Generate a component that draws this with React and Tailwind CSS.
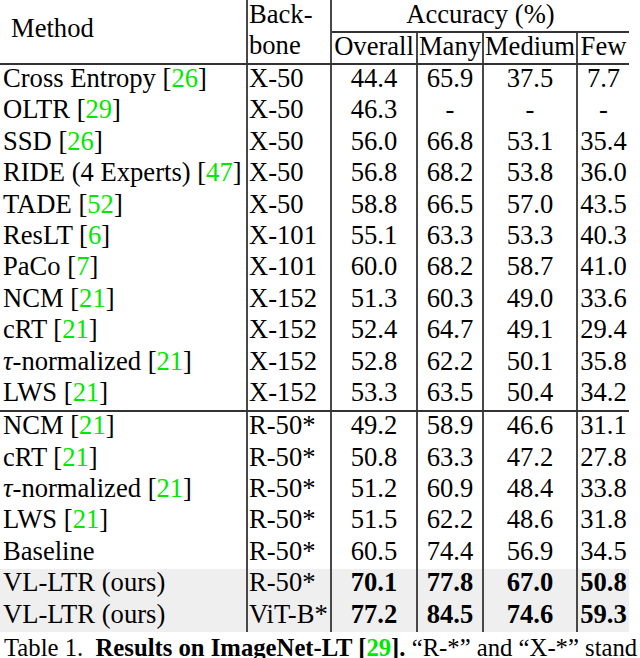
const Cite = ({ n }) => (
  <>
    [<span className="text-[#00e800]">{n}</span>]
  </>
);

const Tau = () => <i>τ</i>;

const groupA = [
  [<>Cross Entropy <Cite n="26" /></>, "X-50", "44.4", "65.9", "37.5", "7.7"],
  [<>OLTR <Cite n="29" /></>, "X-50", "46.3", "-", "-", "-"],
  [<>SSD <Cite n="26" /></>, "X-50", "56.0", "66.8", "53.1", "35.4"],
  [<>RIDE (4 Experts) <Cite n="47" /></>, "X-50", "56.8", "68.2", "53.8", "36.0"],
  [<>TADE <Cite n="52" /></>, "X-50", "58.8", "66.5", "57.0", "43.5"],
  [<>ResLT <Cite n="6" /></>, "X-101", "55.1", "63.3", "53.3", "40.3"],
  [<>PaCo <Cite n="7" /></>, "X-101", "60.0", "68.2", "58.7", "41.0"],
  [<>NCM <Cite n="21" /></>, "X-152", "51.3", "60.3", "49.0", "33.6"],
  [<>cRT <Cite n="21" /></>, "X-152", "52.4", "64.7", "49.1", "29.4"],
  [<><Tau />-normalized <Cite n="21" /></>, "X-152", "52.8", "62.2", "50.1", "35.8"],
  [<>LWS <Cite n="21" /></>, "X-152", "53.3", "63.5", "50.4", "34.2"],
];

const groupB = [
  [<>NCM <Cite n="21" /></>, "R-50*", "49.2", "58.9", "46.6", "31.1"],
  [<>cRT <Cite n="21" /></>, "R-50*", "50.8", "63.3", "47.2", "27.8"],
  [<><Tau />-normalized <Cite n="21" /></>, "R-50*", "51.2", "60.9", "48.4", "33.8"],
  [<>LWS <Cite n="21" /></>, "R-50*", "51.5", "62.2", "48.6", "31.8"],
  ["Baseline", "R-50*", "60.5", "74.4", "56.9", "34.5"],
  ["VL-LTR (ours)", "R-50*", "70.1", "77.8", "67.0", "50.8", true],
  ["VL-LTR (ours)", "ViT-B*", "77.2", "84.5", "74.6", "59.3", true],
];

function Row({ r }) {
  const [method, backbone, overall, many, medium, few, ours] = r;
  const num = ours ? "font-bold" : "";
  return (
    <div className={`flex h-[31.4px] leading-[26px] ${ours ? "bg-[#efefef]" : ""}`}>
      <div className="w-[246px] shrink-0 pl-[3px] whitespace-nowrap">{method}</div>
      <div className="w-[84px] shrink-0 border-l-2 border-[#484848] pl-px whitespace-nowrap">{backbone}</div>
      <div className={`w-[86px] shrink-0 border-l-2 border-[#484848] text-center ${num}`}>{overall}</div>
      <div className={`w-[66px] shrink-0 border-l-2 border-[#484848] text-center ${num}`}>{many}</div>
      <div className={`w-[94px] shrink-0 border-l-2 border-[#484848] text-center ${num}`}>{medium}</div>
      <div className={`w-[53px] shrink-0 border-l-2 border-[#484848] text-center ${num}`}>{few}</div>
    </div>
  );
}

export default function App() {
  return (
    <div
      className="w-[640px] h-[658px] overflow-hidden bg-white text-black text-[26.6px]"
      style={{ fontFamily: "'Liberation Serif', 'Times New Roman', serif" }}
    >
      <div className="w-[629px]">
        {/* HEADER */}
        <div className="flex h-[65px] border-b-2 border-[#333] leading-[26px]">
          <div className="w-[246px] shrink-0 pl-[11px] pt-[15px]">Method</div>
          <div className="w-[84px] shrink-0 border-l-2 border-[#484848] pl-px">
            <div className="h-[32px] leading-[29.5px]">Back-</div>
            <div className="h-[31px]">bone</div>
          </div>
          <div className="w-[299px] shrink-0 border-l-2 border-[#484848] flex flex-col">
            <div className="h-[33px] border-b-2 border-[#333] text-center leading-[29.5px]">Accuracy (%)</div>
            <div className="flex h-[30px]">
              <div className="w-[84px] shrink-0 text-center">Overall</div>
              <div className="w-[66px] shrink-0 border-l-2 border-[#484848] text-center">Many</div>
              <div className="w-[94px] shrink-0 border-l-2 border-[#484848] text-center">Medium</div>
              <div className="w-[53px] shrink-0 border-l-2 border-[#484848] text-center">Few</div>
            </div>
          </div>
        </div>

        {/* ROWS */}
        <div className="border-b-2 border-[#333]">
          {groupA.map((r, i) => (
            <Row key={i} r={r} />
          ))}
        </div>
        <div>
          {groupB.map((r, i) => (
            <Row key={i} r={r} />
          ))}
        </div>
      </div>

      {/* CAPTION */}
      <div className="mt-[3px] pl-[4px] text-[24.7px] leading-[26px] whitespace-nowrap">
        Table 1.&nbsp; <b>Results on ImageNet-LT [<span className="text-[#00e800]">29</span>].</b>&nbsp;“R-*” and “X-*” stand
      </div>
    </div>
  );
}
